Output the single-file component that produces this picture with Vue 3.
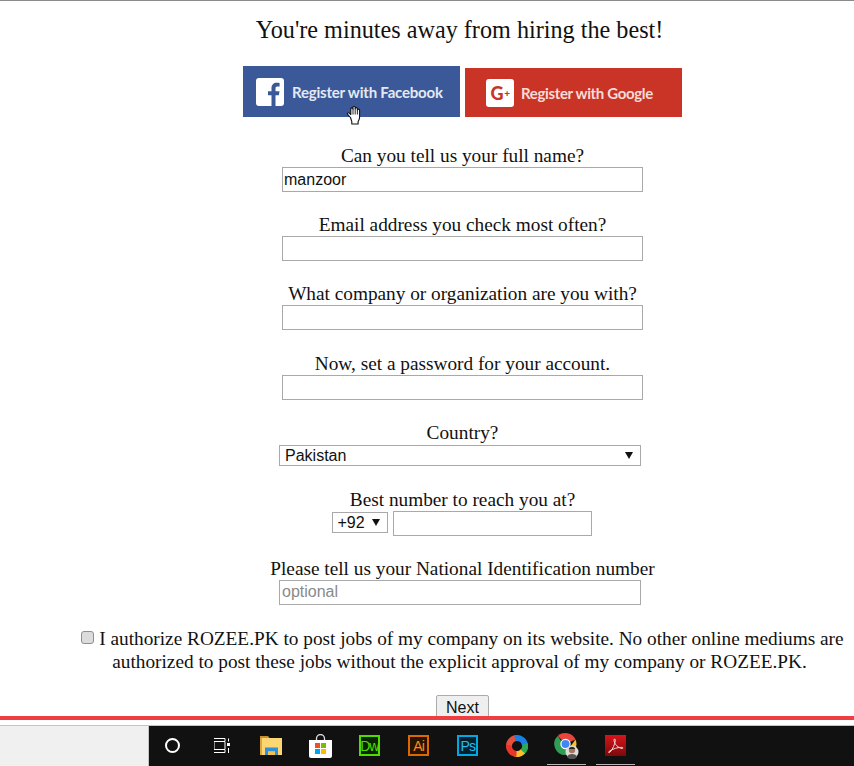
<template>
  <div class="page">
    <main class="content">
      <h2 class="title">You're minutes away from hiring the best!</h2>

      <div class="social">
        <a class="social-btn facebook">
          <span class="social-icon">
            <svg width="28" height="28" viewBox="0 0 28 28">
              <rect width="28" height="28" rx="3" fill="#fff" />
              <path d="M19.5 28V17.3h3.4l.6-4.1h-4v-2.6c0-1.2.4-2 2-2h2.1V5c-.4 0-1.600-.2-3-.2-3 0-5.100 1.900-5.100 5.300v3.100h-3.500v4.100h3.500V28z" fill="#3b5998" />
            </svg>
          </span>
          <span>Register with Facebook</span>
          <svg class="hand" width="17" height="20" viewBox="0 0 17 20">
            <path d="M4.500 12.500 1.800 9.600c-1-1.100.5-2.500 1.600-1.500L4.800 9.500V4c0-1.500 2.200-1.500 2.200 0V2.400c0-1.500 2.200-1.500 2.200 0v1.300c0-1.400 2.200-1.400 2.200 0v1.500c0-1.400 2.200-1.400 2.200 0v6.800c0 2.500-.9 3.300-1.500 4.600v2.400H5.800v-2.400z" fill="#fff" stroke="#111" stroke-width="1.100" stroke-linejoin="round" />
            <path d="M7 4v5.500M9.200 3.700v5.800M11.400 5.200v4.300" fill="none" stroke="#111" stroke-width=".9" />
          </svg>
        </a>
        <a class="social-btn google">
          <span class="social-icon gplus">G<small>+</small></span>
          <span>Register with Google</span>
        </a>
      </div>

      <div v-for="field in fields" :key="field.label" class="field">
        <label class="field-label">{{ field.label }}</label>
        <input class="text-input" type="text" :value="field.value" />
      </div>

      <div class="field country">
        <label class="field-label">Country?</label>
        <div class="select-wrap wide">
          <select class="select-input">
            <option>Pakistan</option>
          </select>
        </div>
      </div>

      <div class="field phone">
        <label class="field-label">Best number to reach you at?</label>
        <div class="phone-row">
          <div class="select-wrap code">
            <select class="select-input">
              <option>+92</option>
            </select>
          </div>
          <input class="text-input phone-input" type="text" />
        </div>
      </div>

      <div class="field national">
        <label class="field-label">Please tell us your National Identification number</label>
        <input class="text-input national-input" type="text" placeholder="optional" />
      </div>

      <p class="consent">
        <input class="check" type="checkbox" />
        I authorize ROZEE.PK to post jobs of my company on its website. No other online mediums are
        authorized to post these jobs without the explicit approval of my company or ROZEE.PK.
      </p>

      <button class="next" type="button">Next</button>
    </main>

    <div class="red-bar"></div>

    <footer class="taskbar">
      <div class="task-left"></div>
      <div class="task-icons">
        <span class="slot"><span class="cortana"></span></span>

        <span class="slot">
          <svg width="16" height="15" viewBox="0 0 16 15" fill="none" stroke="#fff" stroke-width="1">
            <path d="M0 .5h11v2.500M0 14.500h11V12M0 3.500h11v8H0zM14.500 .5v3M14.500 10v5" />
            <rect x="13" y="5" width="3" height="3" fill="#fff" stroke="none" />
          </svg>
        </span>

        <span class="slot">
          <svg width="22" height="19" viewBox="0 0 22 19">
            <path d="M0 0h8l2 2.500H0z" fill="#c8912a" />
            <rect y="2" width="22" height="17" fill="#fcd672" />
            <path d="M0 2h2v17H0z" fill="#dca63c" />
            <path d="M5 19v-7.500h13V19h-3v-3.500H8V19z" fill="#2f8fd8" />
            <rect x="8" y="15.500" width="7" height="3.500" fill="#f2c14e" />
          </svg>
        </span>

        <span class="slot">
          <svg width="23" height="24" viewBox="0 0 23 24">
            <path d="M7.500 6V4.500a4 4 0 0 1 8 0V6" fill="none" stroke="#ddd" stroke-width="1.300" />
            <path d="M0 6h23v16a2 2 0 0 1-2 2H2a2 2 0 0 1-2-2z" fill="#fff" />
            <rect x="6" y="9" width="5" height="5" fill="#f25022" />
            <rect x="12" y="9" width="5" height="5" fill="#7fba00" />
            <rect x="6" y="15" width="5" height="5" fill="#00a4ef" />
            <rect x="12" y="15" width="5" height="5" fill="#ffb900" />
          </svg>
        </span>

        <span class="slot"><span class="app dw">Dw</span></span>
        <span class="slot"><span class="app ai">Ai</span></span>
        <span class="slot"><span class="app ps">Ps</span></span>

        <span class="slot">
          <svg width="22" height="22" viewBox="0 0 22 22" fill="none" stroke-width="6">
            <path d="M3 11a8 8 0 0 1 8-8" stroke="#e8503a" />
            <path d="M9 3.300A8 8 0 0 1 19 10" stroke="#1a80e6" />
            <path d="M19 9a8 8 0 0 1-3 8.300" stroke="#2fa84f" />
            <path d="M16.800 16.500A8 8 0 0 1 9 18.800" stroke="#fbc02d" />
            <path d="M10.500 19A8 8 0 0 1 3 10" stroke="#e8372a" />
          </svg>
        </span>

        <span class="slot open">
          <svg width="25" height="27" viewBox="0 0 25 27">
            <path d="M11.500 12 3.800 4A11 11 0 0 1 21.500 7.500z" fill="#e8453c" />
            <path d="M21.500 7.500A11 11 0 0 1 12 23l4-8z" fill="#f9c02a" />
            <path d="M3.800 4A11 11 0 0 0 12 23l4-8-5 0z" fill="#2f9e52" />
            <circle cx="11.500" cy="12" r="5.200" fill="#fff" />
            <circle cx="11.500" cy="12" r="4" fill="#4285f4" />
            <circle cx="18" cy="20" r="6.500" fill="#ddd" />
            <circle cx="18" cy="18" r="3.200" fill="#a9755a" />
            <path d="M13 25c.5-4 9.500-4 10 0a6.500 6.500 0 0 1-10 0z" fill="#555" />
            <path d="M14.800 17c1-2.800 5.400-2.800 6.400 0z" fill="#222" />
          </svg>
        </span>

        <span class="slot open">
          <svg width="21" height="21" viewBox="0 0 21 21">
            <defs>
              <linearGradient id="pdf" x1="0" y1="0" x2="0" y2="1">
                <stop offset="0" stop-color="#d8141a" />
                <stop offset="1" stop-color="#7c0a0a" />
              </linearGradient>
            </defs>
            <rect width="21" height="21" fill="url(#pdf)" />
            <path d="M4 16.500c-1.200 1 .2 1.500 1 .6C7.500 14.500 10.200 9 10.300 5c0-1.500-1.500-1.300-1.300.5.500 3.800 4.300 7.500 8 8 1.400.1 1.200-1.200-.2-1.200-3.500 0-8.800 1.200-12.800 4.200z" fill="none" stroke="#f6d5d5" stroke-width="1" />
          </svg>
        </span>
      </div>
    </footer>
  </div>
</template>

<script setup>
const fields = [
  { label: 'Can you tell us your full name?', value: 'manzoor' },
  { label: 'Email address you check most often?', value: '' },
  { label: 'What company or organization are you with?', value: '' },
  { label: 'Now, set a password for your account.', value: '' }
]
</script>

<style>
html,
body {
  background: #fff;
}
</style>

<style scoped>
.page {
  display: flex;
  flex-direction: column;
  height: 766px;
  overflow: hidden;
  border-top: 1px solid #8a8a8a;
  box-sizing: border-box;
  background: #fff;
  color: #111;
  font-family: "Liberation Serif", serif;
}

.content {
  flex: 1;
  min-height: 0;
  overflow: hidden;
  display: flex;
  flex-direction: column;
  align-items: center;
  padding: 14px 0 0 71px;
}

.title {
  margin: 0 6px 0 0;
  font-size: 24.2px;
  font-weight: 400;
  line-height: 29px;
}

.social {
  display: flex;
  align-items: flex-end;
  gap: 5px;
  height: 51px;
  margin-top: 22px;
  margin-bottom: 28px;
}

.social-btn {
  position: relative;
  display: flex;
  align-items: center;
  box-sizing: border-box;
  width: 217px;
  color: #e4e8f2;
  font-family: Lato, sans-serif;
  font-size: 15px;
  font-weight: 700;
  white-space: nowrap;
}

.facebook {
  height: 51px;
  padding-left: 13px;
  gap: 8px;
  background: #3b5998;
  letter-spacing: -0.2px;
}

.google {
  height: 49px;
  padding-left: 21px;
  gap: 7px;
  background: #c93426;
  color: #f6dcd8;
  letter-spacing: -0.35px;
}

.social-icon {
  display: flex;
  width: 28px;
  height: 28px;
}

.gplus {
  align-items: center;
  justify-content: center;
  background: #fff;
  border-radius: 3px;
  color: #c93426;
  font-size: 18px;
  font-weight: 900;
}

.gplus small {
  font-size: 10px;
  margin-left: 1px;
}

.hand {
  position: absolute;
  left: 103px;
  bottom: -8px;
}

.field {
  display: flex;
  flex-direction: column;
  align-items: center;
  margin-bottom: 22.2px;
}

.field-label {
  font-size: 19.3px;
  line-height: 22px;
}

.country .field-label,
.phone .field-label {
  line-height: 20px;
  margin-bottom: 2px;
}

.text-input {
  box-sizing: border-box;
  width: 361px;
  height: 25px;
  padding: 0 1px;
  border: 1px solid #a9a9a9;
  background: #fff;
  color: #111;
  font-family: "Liberation Sans", sans-serif;
  font-size: 16px;
  outline: none;
}

.text-input::placeholder {
  color: #8a8a8a;
}

.select-wrap {
  position: relative;
}

.select-wrap::after {
  content: "";
  position: absolute;
  top: 50%;
  right: 8px;
  margin-top: -3px;
  border-style: solid;
  border-width: 7px 4px 0;
  border-color: #111 transparent transparent;
  pointer-events: none;
}

.select-input {
  appearance: none;
  box-sizing: border-box;
  width: 100%;
  height: 100%;
  padding: 0 5px;
  border: 1px solid #a9a9a9;
  border-radius: 0;
  background: #fff;
  color: #111;
  font-family: "Liberation Sans", sans-serif;
  font-size: 16px;
  outline: none;
}

.wide {
  width: 362px;
  height: 21px;
  margin-right: 5px;
}

.country {
  margin-top: 1px;
  margin-bottom: 24px;
}

.phone-row {
  display: flex;
  align-items: flex-start;
  gap: 5px;
  margin-top: -1px;
  margin-right: 2px;
}

.code {
  width: 56px;
  height: 21px;
  margin-top: 1px;
}

.phone-input {
  width: 199px;
}

.national {
  margin-bottom: 22.5px;
}

.national-input {
  width: 362px;
  margin-right: 5px;
  padding-left: 2px;
}

.consent {
  width: 770px;
  margin: 0 6px 21.5px 0;
  font-size: 19.3px;
  line-height: 23px;
  text-align: center;
  text-indent: 6px;
}

.check {
  appearance: none;
  vertical-align: 1px;
  width: 13px;
  height: 13px;
  margin: 0;
  border: 1px solid #8f8f8f;
  border-radius: 3px;
  background: #dcdcdc;
}

.next {
  flex: none;
  box-sizing: border-box;
  width: 53px;
  height: 26px;
  padding: 0;
  border: 1px solid #ababab;
  border-radius: 2px;
  background: #efefef;
  color: #111;
  font-family: "Liberation Sans", sans-serif;
  font-size: 16px;
}

.red-bar {
  flex: none;
  height: 4px;
  margin-bottom: 5px;
  background: #ef3e42;
}

.taskbar {
  flex: none;
  display: flex;
  height: 40px;
  border-top: 1px solid #c4c4c4;
}

.task-left {
  width: 148px;
  background: #f0f0f0;
  border-right: 1px solid #c4c4c4;
}

.task-icons {
  flex: 1;
  display: flex;
  background: #111;
}

.slot {
  position: relative;
  display: flex;
  align-items: center;
  justify-content: center;
  flex: none;
  width: 49.2px;
  height: 39px;
}

.slot:first-child {
  margin-left: -1px;
}

.open::after {
  content: "";
  position: absolute;
  left: 5px;
  right: 5px;
  bottom: 0;
  height: 1px;
  background: #b8b8b8;
}

.cortana {
  box-sizing: border-box;
  width: 15px;
  height: 15px;
  border: 2px solid #fff;
  border-radius: 50%;
}

.app {
  display: flex;
  align-items: center;
  justify-content: center;
  box-sizing: border-box;
  width: 21px;
  height: 21px;
  border: 2px solid;
  font-family: "Liberation Sans", sans-serif;
  font-size: 14px;
  letter-spacing: -1px;
  line-height: 1;
}

.dw {
  border-color: #4fdc00;
  background: #0b2400;
  color: #4fdc00;
}

.ai {
  border-color: #d96a00;
  background: #2a1200;
  color: #ff8a1c;
}

.ps {
  border-color: #00a9e6;
  background: #00202e;
  color: #27bdf0;
}
</style>
